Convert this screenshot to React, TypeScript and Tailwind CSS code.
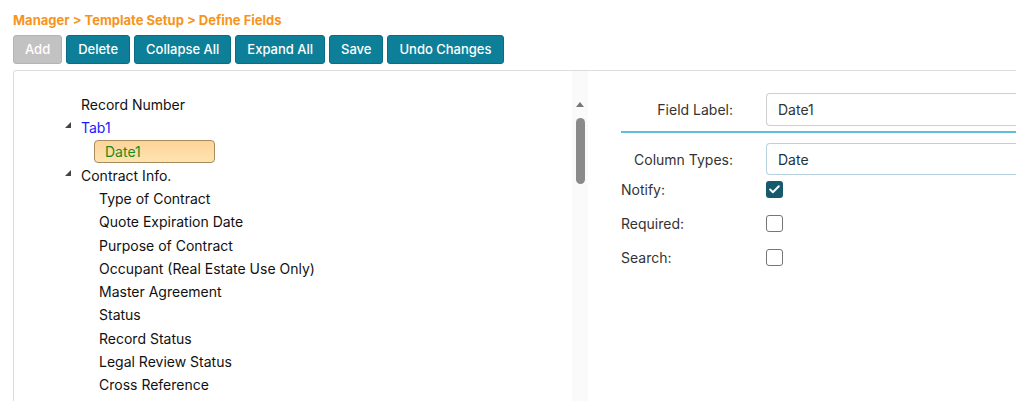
import { Check } from 'lucide-react';

const buttons = [
  { label: 'Add', disabled: true },
  { label: 'Delete' },
  { label: 'Collapse All' },
  { label: 'Expand All' },
  { label: 'Save' },
  { label: 'Undo Changes' },
];

const contractFields = [
  'Type of Contract',
  'Quote Expiration Date',
  'Purpose of Contract',
  'Occupant (Real Estate Use Only)',
  'Master Agreement',
  'Status',
  'Record Status',
  'Legal Review Status',
  'Cross Reference',
];

function Caret() {
  return <span className="mb-[5px] mr-[10px] inline-block h-0 w-0 border-b-[6px] border-l-[6px] border-b-[#444] border-l-transparent" aria-hidden="true" />;
}

function CheckBox({ checked }: { checked?: boolean }) {
  if (checked) {
    return (
      <span className="flex h-[17px] w-[17px] items-center justify-center rounded-[3px] bg-[#175a6e]">
        <Check size={13} strokeWidth={3.5} className="text-white" />
      </span>
    );
  }
  return <span className="block h-[17px] w-[17px] rounded-[3px] border border-[#767676] bg-white" />;
}

export default function App() {
  return (
    <div className="h-[401px] w-[1016px] overflow-hidden bg-white pl-[13px] pt-[11px] font-['Inter',sans-serif]">
      <div className="text-[13px] font-bold leading-[18px] text-[#f7941d]">Manager &gt; Template Setup &gt; Define Fields</div>

      <div className="mt-[6px] flex gap-[4px]">
        {buttons.map((b) => (
          <button
            key={b.label}
            className={
              b.disabled
                ? 'h-[29px] rounded-[3px] border border-[#b4b4b4] bg-[#c2c2c2] px-[11px] text-[13px] font-medium text-white'
                : 'h-[29px] rounded-[3px] border border-[#0a6d84] bg-[#0e7f99] px-[11px] text-[13px] font-medium text-white'
            }
          >
            {b.label}
          </button>
        ))}
      </div>

      <div className="mt-[6px] flex h-[400px] rounded-tl-[4px] border-l border-t border-[#dcdcdc]">
        <div className="w-[558px] shrink-0 pl-[51px] pt-[22px] text-[14px] text-[#111]">
          <div className="flex h-[23px] items-center pl-[16px]">Record Number</div>
          <div className="flex h-[23px] items-center text-[#1a1aff]">
            <Caret />
            Tab1
          </div>
          <div className="ml-[29px] mt-[1px] flex h-[23px] w-[121px] items-center rounded-[4px] border border-[#a88b5c] bg-gradient-to-b from-[#fdd39a] to-[#fde4b0] pl-[10px] text-[#1d8a1d]">
            Date1
          </div>
          <div className="mt-[1px] flex h-[23px] items-center">
            <Caret />
            Contract Info.
          </div>
          <div className="pl-[34px]">
            {contractFields.map((f) => (
              <div key={f} className="flex h-[23.25px] items-center">
                {f}
              </div>
            ))}
          </div>
        </div>

        <div className="flex w-[16px] shrink-0 flex-col items-center bg-[#fafafa] pt-[31px]">
          <span className="h-0 w-0 border-x-[4px] border-b-[5px] border-x-transparent border-b-[#777]" />
          <span className="mt-[11px] h-[66px] w-[9px] rounded-full bg-[#8a8a8a]" />
        </div>

        <div className="flex-1 pl-[33px] pt-[22px] text-[14px] text-[#333]">
          <div className="flex items-center">
            <div className="w-[112px] text-right">Field Label:</div>
            <div className="ml-[33px] flex h-[33px] flex-1 items-center rounded-l-[4px] border border-r-0 border-[#cfcfcf] pl-[11px] text-[#333]">
              Date1
            </div>
          </div>
          <div className="mt-[5px] h-[2px] bg-[#5bc0de]" />
          <div className="mt-[10px] flex items-center">
            <div className="w-[112px] text-right">Column Types:</div>
            <div className="ml-[33px] flex h-[32px] flex-1 items-center rounded-l-[4px] border border-r-0 border-[#b7d3df] pl-[11px] text-[#1c3341]">
              Date
            </div>
          </div>
          <div className="flex h-[28px] items-center">
            <div className="w-[145px]">Notify:</div>
            <CheckBox checked />
          </div>
          <div className="mt-[4px] flex h-[33px] items-center">
            <div className="w-[145px]">Required:</div>
            <CheckBox />
          </div>
          <div className="flex h-[34px] items-center">
            <div className="w-[145px]">Search:</div>
            <CheckBox />
          </div>
        </div>
      </div>
    </div>
  );
}
